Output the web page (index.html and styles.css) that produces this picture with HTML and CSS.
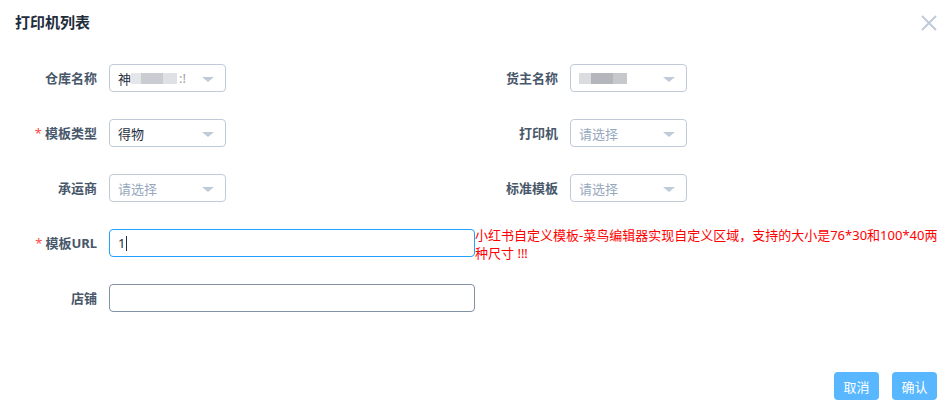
FILE: index.html
```html
<!DOCTYPE html>
<html lang="zh">
<head>
<meta charset="utf-8">
<link rel="stylesheet" href="styles.css">
</head>
<body>
<div class="dialog">
  <div class="header">
    <span class="title">打印机列表</span>
    <svg class="close" width="16" height="16" viewBox="0 0 16 16"><path d="M1 1 L15 15 M15 1 L1 15" stroke="#bfcbd9" stroke-width="2" fill="none"/></svg>
  </div>
  <div class="form">
    <div class="item">
      <label class="label">仓库名称</label>
      <div class="select"><span class="val">神<span class="blur b1"></span><span class="blur b2"></span><span class="blur b3"></span><span class="faint">:!</span></span><i class="arrow"></i></div>
    </div>
    <div class="item">
      <label class="label">货主名称</label>
      <div class="select"><span class="val"><span class="blur b4"></span><span class="blur b5"></span><span class="blur b6"></span></span><i class="arrow"></i></div>
    </div>
    <div class="item">
      <label class="label"><span class="req">*</span>模板类型</label>
      <div class="select"><span class="val">得物</span><i class="arrow"></i></div>
    </div>
    <div class="item">
      <label class="label">打印机</label>
      <div class="select"><span class="ph">请选择</span><i class="arrow"></i></div>
    </div>
    <div class="item">
      <label class="label">承运商</label>
      <div class="select"><span class="ph">请选择</span><i class="arrow"></i></div>
    </div>
    <div class="item">
      <label class="label">标准模板</label>
      <div class="select"><span class="ph">请选择</span><i class="arrow"></i></div>
    </div>
    <div class="item wide">
      <label class="label"><span class="req">*</span>模板URL</label>
      <div class="input focus"><span class="val">1</span><span class="caret"></span></div>
      <div class="tip">小红书自定义模板-菜鸟编辑器实现自定义区域，支持的大小是76*30和100*40两种尺寸 !!!</div>
    </div>
    <div class="item wide">
      <label class="label">店铺</label>
      <div class="input hover"></div>
    </div>
  </div>
  <div class="footer">
    <button class="btn">取消</button>
    <button class="btn">确认</button>
  </div>
</div>
</body>
</html>
```
FILE: styles.css
```css
html, body {
  margin: 0;
  padding: 0;
  background: #fff;
}
body {
  font-family: "Noto Sans", "Noto Sans CJK SC", sans-serif;
  color: #1f2d3d;
  width: 947px;
  height: 400px;
  overflow: hidden;
}
.dialog {
  display: flex;
  flex-direction: column;
}
.header {
  height: 44px;
  display: flex;
  align-items: center;
  justify-content: space-between;
  padding: 0 10px 0 15px;
}
.title {
  font-size: 15px;
  font-weight: bold;
  color: #1f2d3d;
  line-height: 20px;
}
.close {
  display: block;
  margin-top: 2px;
}
.form {
  display: grid;
  grid-template-columns: 461px 1fr;
  row-gap: 27px;
  padding: 20px 0 0 20px;
}
.item {
  display: flex;
  align-items: flex-start;
  height: 28px;
}
.item.wide {
  grid-column: 1 / -1;
}
.label {
  width: 89px;
  box-sizing: border-box;
  padding-right: 12px;
  text-align: right;
  font-size: 13px;
  font-weight: bold;
  color: #48576a;
  line-height: 28px;
}
.req {
  color: #ff4949;
  margin-right: 3px;
  font-weight: normal;
}
.select, .input {
  box-sizing: border-box;
  height: 28px;
  border: 1px solid #bfcbd9;
  border-radius: 4px;
  display: flex;
  align-items: center;
  padding: 0 8px;
  font-size: 13px;
  position: relative;
}
.select {
  width: 117px;
}
.input {
  width: 366px;
}
.input.focus {
  border-color: #20a0ff;
}
.input.hover {
  border-color: #8391a5;
}
.val {
  color: #1f2d3d;
  display: flex;
  align-items: center;
}
.ph {
  color: #97a8be;
}
.caret {
  display: inline-block;
  width: 1px;
  height: 15px;
  background: #1f2d3d;
  margin-left: 1px;
}
.arrow {
  position: absolute;
  right: 11px;
  top: 12px;
  width: 0;
  height: 0;
  border-left: 6px solid transparent;
  border-right: 6px solid transparent;
  border-top: 5px solid #bfcbd9;
}
.blur {
  display: inline-block;
  height: 11px;
}
.b1 { width: 10px; background: #e4e6e9; }
.b2 { width: 22px; background: #c9ccd1; }
.b3 { width: 14px; background: #dfe1e4; }
.b4 { width: 12px; background: #dadcdf; }
.b5 { width: 22px; background: #b3b6bb; }
.b6 { width: 14px; background: #c6c8cc; }
.faint {
  color: #9aa0a8;
  margin-left: 2px;
}
.tip {
  width: 470px;
  font-size: 13px;
  line-height: 18px;
  color: #ff0000;
  margin-top: -3px;
}
.footer {
  display: flex;
  justify-content: flex-end;
  gap: 13px;
  padding-right: 10px;
  margin-top: 60px;
}
.btn {
  width: 45px;
  height: 28px;
  border: none;
  border-radius: 4px;
  background: #58b7ff;
  color: #fff;
  font-family: "Noto Sans", "Noto Sans CJK SC", sans-serif;
  font-size: 13px;
  padding: 0;
}
```
